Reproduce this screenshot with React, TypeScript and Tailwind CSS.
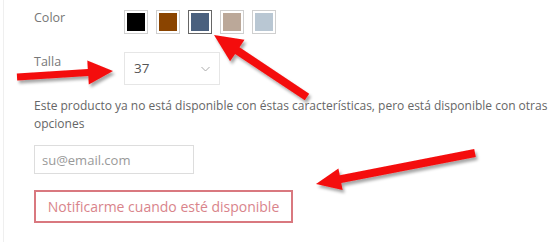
import React from 'react';

type Pt = [number, number];

// Builds the outline of an annotation arrow from tail to tip
const arrowPoints = (tail: Pt, tip: Pt, shaft: number, headLen: number, headW: number) => {
  const dx = tip[0] - tail[0];
  const dy = tip[1] - tail[1];
  const len = Math.hypot(dx, dy);
  const ux = dx / len;
  const uy = dy / len;
  const nx = -uy;
  const ny = ux;
  const bx = tip[0] - ux * headLen;
  const by = tip[1] - uy * headLen;
  const pts: Pt[] = [
    [tail[0] + nx * shaft / 2, tail[1] + ny * shaft / 2],
    [bx + nx * shaft / 2, by + ny * shaft / 2],
    [bx + nx * headW / 2, by + ny * headW / 2],
    tip,
    [bx - nx * headW / 2, by - ny * headW / 2],
    [bx - nx * shaft / 2, by - ny * shaft / 2],
    [tail[0] - nx * shaft / 2, tail[1] - ny * shaft / 2],
  ];
  return pts.map(p => `${p[0].toFixed(1)},${p[1].toFixed(1)}`).join(' ');
};

const swatches = [
  { color: '#000000', selected: false },
  { color: '#8a4400', selected: false },
  { color: '#4a607e', selected: true },
  { color: '#bba899', selected: false },
  { color: '#b9c7d3', selected: false },
];

const App: React.FC = () => {
  return (
    <div className="relative w-[549px] h-[242px] overflow-hidden bg-white font-['Open_Sans',sans-serif]">
      <div className="ml-[3px] h-full border-l border-[#efefef] pl-[30px] pt-[10px]">
        {/* Color */}
        <div className="flex items-start">
          <span className="w-[90px] -mt-[1px] text-[12.5px] leading-[18px] text-[#777]">Color</span>
          <div className="flex gap-[8px]">
            {swatches.map(s => (
              <div
                key={s.color}
                className={`w-[24px] h-[24px] p-[2px] bg-white border ${s.selected ? 'border-[#666]' : 'border-[#cfcfcf]'}`}
              >
                <div className="w-full h-full" style={{ backgroundColor: s.color }} />
              </div>
            ))}
          </div>
        </div>

        {/* Talla */}
        <div className="flex items-start mt-[18px]">
          <span className="w-[90px] mt-[1px] text-[12.5px] leading-[18px] text-[#777]">Talla</span>
          <div className="flex items-center justify-between w-[96px] h-[33px] pl-[9px] pr-[9px] border border-[#e6e6e6] text-[13.5px] text-[#555]">
            <span>37</span>
            <svg width="9" height="6" viewBox="0 0 9 6" fill="none">
              <path d="M0.5 1l4 4 4-4" stroke="#aaa" strokeWidth="1" />
            </svg>
          </div>
        </div>

        <p className="mt-[12px] text-[12px] leading-[18px] text-[#666]">
          Este producto ya no está disponible con éstas características, pero está disponible con otras opciones
        </p>

        <input
          type="text"
          placeholder="su@email.com"
          className="block mt-[12px] w-[160px] h-[29px] px-[7px] border border-[#ddd] text-[13px] text-[#555] placeholder-[#999] outline-none"
        />

        <button className="block mt-[16px] w-[259px] h-[33px] border-2 border-[#d9787f] text-[14px] text-[#d9848b] bg-white">
          Notificarme cuando esté disponible
        </button>
      </div>

      {/* annotation arrows */}
      <svg className="absolute inset-0 pointer-events-none" width="549" height="242">
        <defs>
          <filter id="shadow" x="-20%" y="-20%" width="140%" height="140%">
            <feDropShadow dx="2" dy="3" stdDeviation="1.5" floodColor="#000" floodOpacity="0.35" />
          </filter>
        </defs>
        <g fill="#f40d0d" filter="url(#shadow)">
          <polygon points={arrowPoints([17, 77], [113, 71], 7, 25, 24)} />
          <polygon points={arrowPoints([307, 97], [214, 35], 8, 28, 26)} />
          <polygon points={arrowPoints([475, 153], [316, 184], 8, 25, 22)} />
        </g>
      </svg>
    </div>
  );
};

export default App;
